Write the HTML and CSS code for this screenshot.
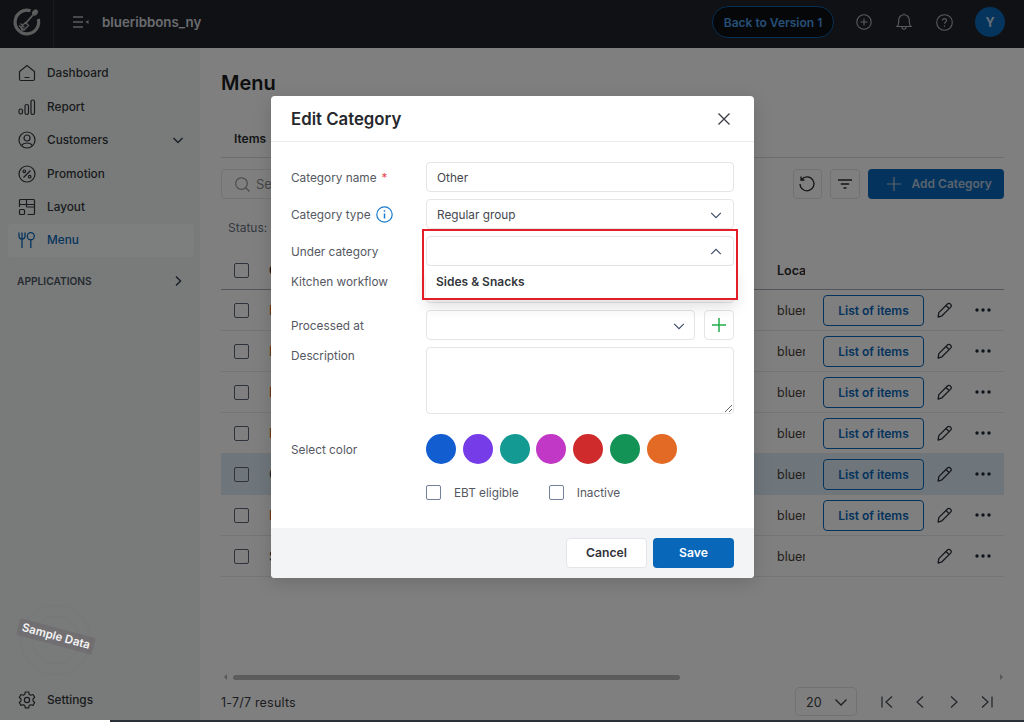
FILE: index.html
```html
<!DOCTYPE html>
<html lang="en">

<head>
    <meta charset="UTF-8">
    <meta name="viewport" content="width=device-width, initial-scale=1.0">
    <title>Edit Category</title>
    <link rel="stylesheet" href="styles.css">
</head>

<body>
    <svg class="defs" width="0" height="0">
        <symbol id="chev-down" viewBox="0 0 16 16"><path d="M2.500 5.500 8 11l5.500-5.500" fill="none" stroke="currentColor" stroke-width="1.300"/></symbol>
        <symbol id="chev-up" viewBox="0 0 16 16"><path d="M2.500 10.500 8 5l5.500 5.500" fill="none" stroke="currentColor" stroke-width="1.300"/></symbol>
        <symbol id="pencil" viewBox="0 0 16 16"><path d="M1.800 10.600 10.200 2.200c1-1 2.400-1 3.300-.1s.9 2.300-.1 3.300L5 13.800l-3.900 1.300zM9 3.500l3.500 3.500" fill="none" stroke="currentColor" stroke-width="1.300" stroke-linejoin="round"/></symbol>
        <symbol id="dots" viewBox="0 0 16 16"><circle cx="2" cy="8" r="1.700" fill="currentColor"/><circle cx="8" cy="8" r="1.700" fill="currentColor"/><circle cx="14" cy="8" r="1.700" fill="currentColor"/></symbol>
    </svg>

    <div class="app">
        <header class="topbar">
            <div class="logo-cell">
                <svg width="30" height="30" viewBox="0 0 30 30" fill="none" stroke="#b8b8b8">
                    <path d="M18.500 3.800A11.800 11.800 0 1 0 26.300 12" stroke-width="3.200"/>
                    <path d="M13 17l8-9" stroke-width="1.800"/>
                    <ellipse cx="23" cy="5.500" rx="2.600" ry="3.400" transform="rotate(40 23 5.500)" fill="#b8b8b8" stroke="none"/>
                    <path d="M13.500 15.500l3 3-4.500 4.500-3-3zM8.500 16.500l4 4M7 18.500l4 4M9 21l1.500 3" stroke-width="1.300"/>
                </svg>
            </div>
            <svg class="collapse-icon" width="16" height="12" viewBox="0 0 16 12" fill="none" stroke="#b4b6ba" stroke-width="1.300">
                <path d="M0 1h10M0 6h10M0 11h10"/>
                <path d="M15.500 4v4L12.500 6z" fill="#b4b6ba" stroke="none"/>
            </svg>
            <span class="store-name">blueribbons_ny</span>
            <div class="topbar-right">
                <button class="back-btn">Back to Version 1</button>
                <svg class="top-icon" width="16" height="16" viewBox="0 0 16 16" fill="none" stroke="#b4b6ba" stroke-width="1.100"><circle cx="8" cy="8" r="7.200"/><path d="M8 4.500v7M4.500 8h7"/></svg>
                <svg class="top-icon" width="16" height="18" viewBox="0 0 16 18" fill="none" stroke="#b4b6ba" stroke-width="1.100"><path d="M1 13.500c1.200-1 1.700-2 1.700-4V7a5.300 5.300 0 0 1 10.600 0v2.500c0 2 .5 3 1.700 4zM6 14c0 3 4 3 4 0M8 .6v1"/></svg>
                <svg class="top-icon" width="17" height="17" viewBox="0 0 17 17" fill="none" stroke="#b4b6ba" stroke-width="1.100"><circle cx="8.500" cy="8.500" r="7.800"/><path d="M6.500 6.600c0-2.600 4-2.600 4 0 0 1.500-2 1.600-2 3.200M8.500 11.500v1.200"/></svg>
                <span class="avatar">Y</span>
            </div>
        </header>

        <div class="body-row">
            <aside class="sidebar">
                <nav class="nav">
                    <a class="nav-item">
                        <svg width="18" height="18" viewBox="0 0 18 18" fill="none" stroke="currentColor" stroke-width="1.200"><path d="M1.500 15V7.500L9 1.500l7.500 6V15a1.500 1.500 0 0 1-1.500 1.500H3A1.500 1.500 0 0 1 1.500 15zM6.500 13.500h5"/></svg>
                        Dashboard
                    </a>
                    <a class="nav-item">
                        <svg width="18" height="18" viewBox="0 0 18 18" fill="none" stroke="currentColor" stroke-width="1.200"><rect x="1" y="11" width="3.500" height="5" rx="1.700"/><rect x="7" y="6.500" width="3.500" height="10" rx="1.700"/><rect x="13" y="2" width="3.500" height="14.500" rx="1.700"/></svg>
                        Report
                    </a>
                    <a class="nav-item">
                        <svg width="18" height="18" viewBox="0 0 18 18" fill="none" stroke="currentColor" stroke-width="1.200"><circle cx="9" cy="9" r="8"/><circle cx="9" cy="7" r="3"/><path d="M3.800 14.500c1-2 3-2.500 5.200-2.500s4.200.5 5.200 2.500"/></svg>
                        Customers
                        <svg class="nav-arrow" width="12" height="12" viewBox="0 0 12 12" fill="none" stroke="currentColor" stroke-width="1.500"><path d="M1.500 4 6 8.500 10.500 4"/></svg>
                    </a>
                    <a class="nav-item">
                        <svg width="18" height="18" viewBox="0 0 18 18" fill="none" stroke="currentColor" stroke-width="1.200"><circle cx="9" cy="9" r="8"/><path d="M12.500 5.500l-7 7"/><circle cx="6.300" cy="6.300" r="1.300"/><circle cx="11.700" cy="11.700" r="1.300"/></svg>
                        Promotion
                    </a>
                    <a class="nav-item">
                        <svg width="18" height="18" viewBox="0 0 18 18" fill="none" stroke="currentColor" stroke-width="1.200"><path d="M1.500 9V2.500a1 1 0 0 1 1-1h13a1 1 0 0 1 1 1v13a1 1 0 0 1-1 1h-6M1.500 6.500h15M8.500 1.500V9M8.500 9h8"/><rect x="1.500" y="11.500" width="5" height="5" rx="1"/></svg>
                        Layout
                    </a>
                    <a class="nav-item active">
                        <svg width="18" height="18" viewBox="0 0 18 18" fill="none" stroke="currentColor" stroke-width="1.300"><path d="M1 1.500V5c0 2 1.300 3 3 3s3-1 3-3V1.500M4 1.500V17"/><circle cx="12.800" cy="5.200" r="3.500"/><path d="M12.800 8.700V17"/></svg>
                        Menu
                    </a>
                    <div class="nav-section">
                        APPLICATIONS
                        <svg class="nav-arrow" width="12" height="12" viewBox="0 0 12 12" fill="none" stroke="currentColor" stroke-width="1.500"><path d="M4 1.500 8.500 6 4 10.500"/></svg>
                    </div>
                </nav>

                <div class="stamp">
                    <span class="stamp-ring"></span>
                    <span class="stamp-label">Sample Data</span>
                </div>

                <a class="nav-item settings">
                    <svg width="18" height="18" viewBox="0 0 18 18" fill="none" stroke="currentColor" stroke-width="1.200" stroke-linejoin="round"><circle cx="9" cy="9" r="2.600"/><path d="M7.300 1h3.400l.5 2.300 1.500.9 2.300-.7 1.700 2.900-1.700 1.600v1.900l1.700 1.600-1.700 2.900-2.300-.7-1.500.9-.5 2.300H7.300l-.5-2.300-1.500-.9-2.300.7-1.700-2.900L3 9.900V8L1.300 6.400 3 3.500l2.300.7 1.500-.9z"/></svg>
                    Settings
                </a>
            </aside>

            <main class="main">
                <h1 class="page-title">Menu</h1>
                <div class="tabs"><span class="tab">Items</span></div>

                <div class="toolbar">
                    <div class="search">
                        <svg width="15" height="15" viewBox="0 0 15 15" fill="none" stroke="#8a8d93" stroke-width="1.100"><circle cx="6.500" cy="6.500" r="5.800"/><path d="M10.800 10.800l3.700 3.700"/></svg>
                        <span>Search</span>
                    </div>
                    <button class="tool-btn">
                        <svg width="18" height="18" viewBox="0 0 18 18" fill="none" stroke="#2b2d31" stroke-width="1.300"><path d="M3.500 4.500A7 7 0 1 1 2 9M3 1.500v3.500h3.500"/></svg>
                    </button>
                    <button class="tool-btn">
                        <svg width="14" height="10" viewBox="0 0 14 10" fill="none" stroke="#2b2d31" stroke-width="1.300"><path d="M0 1h14M2.800 5h8.400M5.500 9h3"/></svg>
                    </button>
                    <button class="add-btn">
                        <svg width="14" height="14" viewBox="0 0 14 14" fill="none" stroke="#b4c8dc" stroke-width="1.200"><path d="M7 0v14M0 7h14"/></svg>
                        Add Category
                    </button>
                </div>

                <div class="status">Status: All</div>

                <div class="table">
                    <div class="row head">
                        <span class="check"></span><span class="cell-name">Category</span><span class="cell-loc">Loca</span>
                    </div>
                    <div class="row">
                        <span class="check"></span><span class="cell-name link">Burgers</span><span class="cell-loc">bluer</span>
                        <button class="list-btn">List of items</button>
                        <svg class="pencil"><use href="#pencil"/></svg>
                        <svg class="dots"><use href="#dots"/></svg>
                    </div>
                    <div class="row">
                        <span class="check"></span><span class="cell-name link">Drinks</span><span class="cell-loc">bluer</span>
                        <button class="list-btn">List of items</button>
                        <svg class="pencil"><use href="#pencil"/></svg>
                        <svg class="dots"><use href="#dots"/></svg>
                    </div>
                    <div class="row">
                        <span class="check"></span><span class="cell-name link">Entrees</span><span class="cell-loc">bluer</span>
                        <button class="list-btn">List of items</button>
                        <svg class="pencil"><use href="#pencil"/></svg>
                        <svg class="dots"><use href="#dots"/></svg>
                    </div>
                    <div class="row">
                        <span class="check"></span><span class="cell-name link">Pizza</span><span class="cell-loc">bluer</span>
                        <button class="list-btn">List of items</button>
                        <svg class="pencil"><use href="#pencil"/></svg>
                        <svg class="dots"><use href="#dots"/></svg>
                    </div>
                    <div class="row selected">
                        <span class="check"></span><span class="cell-name">Other</span><span class="cell-loc">bluer</span>
                        <button class="list-btn">List of items</button>
                        <svg class="pencil"><use href="#pencil"/></svg>
                        <svg class="dots"><use href="#dots"/></svg>
                    </div>
                    <div class="row">
                        <span class="check"></span><span class="cell-name link">Beer</span><span class="cell-loc">bluer</span>
                        <button class="list-btn">List of items</button>
                        <svg class="pencil"><use href="#pencil"/></svg>
                        <svg class="dots"><use href="#dots"/></svg>
                    </div>
                    <div class="row">
                        <span class="check"></span><span class="cell-name">Sides &amp; Snacks</span><span class="cell-loc">bluer</span>
                        <span></span>
                        <svg class="pencil"><use href="#pencil"/></svg>
                        <svg class="dots"><use href="#dots"/></svg>
                    </div>
                </div>

                <div class="scrollbar">
                    <span class="scroll-arrow left"></span>
                    <span class="scroll-track"><span class="scroll-thumb"></span></span>
                    <span class="scroll-arrow right"></span>
                </div>

                <div class="pager">
                    <span class="results">1-7/7 results</span>
                    <div class="page-size">20 <svg width="16" height="16"><use href="#chev-down"/></svg></div>
                    <div class="pager-icons">
                        <svg width="14" height="14" viewBox="0 0 14 14" fill="none" stroke="currentColor" stroke-width="1.200"><path d="M2 1.500v11M12 1.500 6 7l6 5.500"/></svg>
                        <svg width="14" height="14" viewBox="0 0 14 14" fill="none" stroke="currentColor" stroke-width="1.200"><path d="M10 1.500 4 7l6 5.500"/></svg>
                        <svg width="14" height="14" viewBox="0 0 14 14" fill="none" stroke="currentColor" stroke-width="1.200"><path d="M4 1.500 10 7l-6 5.500"/></svg>
                        <svg width="14" height="14" viewBox="0 0 14 14" fill="none" stroke="currentColor" stroke-width="1.200"><path d="M12 1.500v11M2 1.500 8 7l-6 5.500"/></svg>
                    </div>
                </div>
            </main>
        </div>

        <div class="overlay">
            <section class="modal">
                <div class="modal-head">
                    <h2 class="modal-title">Edit Category</h2>
                    <svg width="14" height="14" viewBox="0 0 14 14" fill="none" stroke="#3a3d44" stroke-width="1.300"><path d="M1.500 1.500l11 11M12.500 1.500l-11 11"/></svg>
                </div>

                <div class="modal-form">
                    <label class="form-label">Category name <span class="req">*</span></label>
                    <input class="field" type="text" value="Other">

                    <label class="form-label">
                        Category type
                        <svg class="info" width="17" height="17" viewBox="0 0 17 17" fill="none" stroke="#1a7ad0" stroke-width="1.200"><circle cx="8.500" cy="8.500" r="7.700"/><path d="M8.500 7.500v5M8.500 4.300v1.500" stroke-width="1.500"/></svg>
                    </label>
                    <div class="field select">Regular group <svg class="chev"><use href="#chev-down"/></svg></div>

                    <label class="form-label">Under category</label>
                    <div class="under-wrap">
                        <div class="field select focus"><svg class="chev"><use href="#chev-up"/></svg></div>
                        <div class="dropdown">Sides &amp; Snacks</div>
                        <span class="annotation"></span>
                    </div>

                    <label class="form-label top">Kitchen workflow</label>
                    <div class="field select"></div>

                    <label class="form-label">Processed at</label>
                    <div class="processed">
                        <div class="field select"><svg class="chev"><use href="#chev-down"/></svg></div>
                        <button class="plus-btn">
                            <svg width="14" height="14" viewBox="0 0 14 14" fill="none" stroke="#1fae4b" stroke-width="1.500"><path d="M7 0v14M0 7h14"/></svg>
                        </button>
                    </div>

                    <label class="form-label top">Description</label>
                    <textarea class="field notes"></textarea>

                    <label class="form-label color-label">Select color</label>
                    <div class="colors">
                        <span class="swatch c-blue"></span>
                        <span class="swatch c-violet"></span>
                        <span class="swatch c-teal"></span>
                        <span class="swatch c-pink"></span>
                        <span class="swatch c-red"></span>
                        <span class="swatch c-green"></span>
                        <span class="swatch c-orange"></span>
                    </div>

                    <span></span>
                    <div class="flags">
                        <label class="flag"><span class="check small"></span>EBT eligible</label>
                        <label class="flag"><span class="check small"></span>Inactive</label>
                    </div>
                </div>

                <div class="modal-foot">
                    <button class="btn-cancel">Cancel</button>
                    <button class="btn-save">Save</button>
                </div>
            </section>
        </div>
    </div>
    <div class="strip"></div>
</body>

</html>
```

FILE: styles.css
```css
* {
    box-sizing: border-box;
}

body {
    margin: 0;
    overflow: hidden;
    font-family: Inter, "Liberation Sans", sans-serif;
    font-size: 13px;
    color: #2b2d31;
    background: #fff;
}

button {
    font-family: inherit;
    cursor: pointer;
}

.defs {
    position: absolute;
}

.app {
    position: relative;
    display: flex;
    flex-direction: column;
    height: 720px;
    overflow: hidden;
}

.strip {
    height: 2px;
    background: linear-gradient(to right, #fff 110px, #2a3038 110px);
}

/* top bar */
.topbar {
    display: flex;
    align-items: center;
    flex: none;
    height: 48px;
    padding-bottom: 4px;
    background: #1f232b;
    color: #fff;
}

.logo-cell {
    display: flex;
    align-items: center;
    justify-content: center;
    width: 54px;
    height: 48px;
    margin-bottom: -4px;
    padding-bottom: 4px;
    border-right: 1px solid #33363c;
}

.collapse-icon {
    margin-left: 19px;
}

.store-name {
    margin-left: 13px;
    font-size: 13.3px;
    font-weight: 600;
    color: #d5d7de;
}

.topbar-right {
    display: flex;
    align-items: center;
    margin-left: auto;
    padding-right: 19px;
}

.back-btn {
    width: 122px;
    height: 32px;
    padding: 0;
    margin-right: 22px;
    border: 1px solid #0c5ea8;
    border-radius: 16px;
    background: #0b0e12;
    color: #4d9fe8;
    font-size: 12px;
    font-weight: 600;
}

.top-icon {
    margin-right: 24px;
}

.avatar {
    display: flex;
    align-items: center;
    justify-content: center;
    width: 30px;
    height: 30px;
    margin-left: -2px;
    border-radius: 50%;
    background: #0b68bb;
    color: #c9dcee;
    font-size: 12.5px;
    font-weight: 700;
}

/* sidebar */
.body-row {
    display: flex;
    flex: 1;
    min-height: 0;
}

.sidebar {
    display: flex;
    flex-direction: column;
    flex: none;
    width: 200px;
    padding: 8.800px 6px 3px 8px;
    background: #f2f6f4;
}

.nav-item {
    display: flex;
    align-items: center;
    gap: 11px;
    height: 33.400px;
    padding: 0 10px;
    font-size: 11.800px;
    font-weight: 500;
    color: #33363c;
    border-radius: 4px;
}

.nav-item.active {
    background: #fbfdfc;
    color: #0b68bb;
}

.nav-arrow {
    margin-left: auto;
    margin-right: 0;
    color: #374151;
}

.nav-section {
    display: flex;
    align-items: center;
    margin-top: 15px;
    padding: 0 10px 0 9px;
    height: 17px;
    font-size: 10.200px;
    font-weight: 600;
    color: #4b5563;
}

.stamp {
    position: relative;
    width: 72px;
    height: 72px;
    margin: auto 0 8px 12px;
}

.stamp-ring {
    display: block;
    width: 72px;
    height: 72px;
    border: 2px solid #eef2f0;
    border-radius: 50%;
    box-shadow: inset 0 0 0 9px #f2f6f4, inset 0 0 0 11px #eef2f0;
}

/* not dimmed by the overlay in the reference */
.stamp-label {
    position: absolute;
    z-index: 2;
    left: -3px;
    top: 24px;
    width: 78px;
    padding: 1px 0 2px;
    background: rgba(100, 90, 100, .35);
    border-radius: 2px;
    color: #f4f4f4;
    font-size: 11.500px;
    font-weight: 600;
    text-align: center;
    white-space: nowrap;
    transform: rotate(15deg);
}

.settings {
    flex: none;
}

/* main */
.main {
    position: relative;
    flex: 1;
    min-width: 0;
    padding: 0 20px 0 21px;
    background: #fff;
}

.page-title {
    margin: 23px 0 0;
    font-size: 20px;
    line-height: 24px;
    font-weight: 600;
    color: #1b1d21;
}

.tabs {
    height: 43px;
    margin-top: 20px;
    padding-top: 12px;
    border-bottom: 1px solid #d9dbe0;
    line-height: 22px;
}

.tab {
    margin-left: 13px;
    font-size: 12px;
    font-weight: 600;
}

.toolbar {
    display: flex;
    align-items: center;
    gap: 8px;
    margin-top: 11px;
}

.search {
    display: flex;
    align-items: center;
    gap: 6px;
    height: 30px;
    width: 300px;
    margin-right: auto;
    padding-left: 13px;
    border: 1px solid #e5e7eb;
    border-radius: 4px;
    color: #8a8d93;
}

.tool-btn {
    display: flex;
    align-items: center;
    justify-content: center;
    width: 29.500px;
    height: 30px;
    padding: 0;
    border: 1px solid #e0e2e6;
    border-radius: 4px;
    background: #fff;
}

.add-btn {
    display: flex;
    align-items: center;
    gap: 11px;
    width: 136.500px;
    height: 30px;
    padding: 0 0 1px 19px;
    border: 0;
    border-radius: 4px;
    background: #0967ba;
    color: #b4c8dc;
    font-size: 12px;
    font-weight: 600;
}

.status {
    margin-top: 20px;
    padding-left: 7px;
    font-size: 12px;
    line-height: 18px;
    color: #6b7280;
}

/* table */
.table {
    margin-top: 12px;
}

.row {
    display: grid;
    grid-template-columns: 48px 508px 46px 101px 42px 34px;
    align-items: center;
    height: 41px;
    border-bottom: 1px solid #e7e8ec;
    font-size: 12.500px;
}

.row.head {
    height: 42px;
    padding-top: 4px;
    border-bottom-color: #a5aab5;
    font-weight: 600;
    margin-top: -1px;
}

.row.selected {
    background: #dcecf6;
}

.check {
    display: block;
    width: 15px;
    height: 15px;
    margin-left: 13px;
    border: 1px solid #5c6573;
    border-radius: 2px;
    background: #fff;
}

.row.selected .check {
    background: #dcecf6;
}

.cell-name {
    white-space: nowrap;
    overflow: hidden;
}

.cell-name.link {
    color: #c95e14;
}

.cell-loc {
    width: 28px;
    overflow: hidden;
    white-space: nowrap;
    color: #4a3f3a;
}

.head .cell-loc {
    color: #2b2d31;
}

.list-btn {
    height: 31px;
    padding: 0;
    border: 1px solid #0967ba;
    border-radius: 4px;
    background: transparent;
    color: #0967ba;
    font-size: 12px;
    font-weight: 600;
}

.pencil {
    width: 16px;
    height: 16px;
    margin-left: 13px;
    color: #2b3038;
}

.dots {
    width: 16px;
    height: 16px;
    margin-left: 9px;
    color: #1f2937;
}

/* scrollbar + pager */
.scrollbar {
    position: absolute;
    left: 21px;
    right: 18px;
    top: 626px;
    display: flex;
    align-items: center;
    height: 6px;
}

.scroll-track {
    flex: 1;
    padding: 0 6px;
}

.scroll-thumb {
    display: block;
    width: 447px;
    height: 5px;
    border-radius: 3px;
    background: #b9b9b9;
}

.scroll-arrow {
    width: 0;
    height: 0;
    border: 3px solid transparent;
}

.scroll-arrow.left {
    border-right-color: #b0b0b0;
}

.scroll-arrow.right {
    border-left-color: #b0b0b0;
}

.pager {
    position: absolute;
    left: 21px;
    right: 20px;
    top: 639px;
    display: flex;
    align-items: center;
    height: 29px;
}

.results {
    padding-top: 2px;
    font-size: 12.500px;
    color: #3a3d44;
    letter-spacing: .2px;
}

.page-size {
    display: flex;
    align-items: center;
    gap: 11px;
    width: 62px;
    height: 29px;
    margin-left: auto;
    padding: 1px 0 0 10px;
    border: 1px solid #e3e5e9;
    border-radius: 4px;
    font-size: 12.500px;
    color: #3a3d44;
}

.pager-icons {
    display: flex;
    gap: 19.300px;
    margin-left: 23px;
    margin-right: 10px;
    color: #3f4652;
}

/* modal */
.overlay {
    position: absolute;
    inset: 0;
    z-index: 1;
    display: flex;
    justify-content: center;
    align-items: flex-start;
    padding: 96px 0 0 1px;
    background: rgba(0, 0, 0, .5);
}

.modal {
    width: 483px;
    border-radius: 4px;
    background: #fff;
    overflow: visible;
    box-shadow: 0 4px 18px rgba(0, 0, 0, .15);
}

.modal-head {
    display: flex;
    align-items: center;
    justify-content: space-between;
    height: 46px;
    padding: 0 23px 0 20px;
    border-bottom: 1px solid #e8eaed;
}

.modal-title {
    margin: 0;
    font-size: 16.800px;
    font-weight: 600;
    color: #26282d;
}

.modal-form {
    display: grid;
    grid-template-columns: 135px 308px;
    gap: 7px 0;
    padding: 20px 20px 28px;
}

.form-label {
    display: flex;
    align-items: center;
    gap: 5px;
    padding-top: 1px;
    font-size: 11.800px;
    color: #55585f;
}

.form-label.top {
    align-self: start;
    align-items: flex-start;
    padding-top: 0;
    line-height: 18px;
}

.color-label {
    margin-top: 13px;
}

.req {
    color: #e5484d;
}

.field {
    display: block;
    width: 100%;
    height: 30px;
    padding: 1px 10px 0;
    border: 1px solid #e3e5e9;
    border-radius: 4px;
    background: #fff;
    font-family: inherit;
    font-size: 11.800px;
    color: #44474e;
    outline: none;
}

.select {
    display: flex;
    align-items: center;
    justify-content: space-between;
}

.chev {
    width: 14px;
    height: 14px;
    margin-left: auto;
    margin-right: 0;
    color: #3d4b66;
}

.under-wrap {
    position: relative;
}

.dropdown {
    position: absolute;
    left: 0;
    right: -2px;
    top: 30px;
    z-index: 2;
    height: 33px;
    padding: 8px 10px;
    background: #fff;
    font-size: 12px;
    font-weight: 600;
    color: #33363c;
    box-shadow: 0 8px 14px rgba(0, 0, 0, .12);
}

.annotation {
    position: absolute;
    left: -4px;
    right: -4px;
    top: -7px;
    z-index: 3;
    height: 71px;
    border: 2px solid #e21f26;
}

.processed {
    display: flex;
    gap: 9px;
}

.processed .select {
    flex: 1;
}

.processed .chev {
    margin-right: -2px;
}

.plus-btn {
    display: flex;
    align-items: center;
    justify-content: center;
    flex: none;
    width: 30px;
    height: 30px;
    padding: 0;
    border: 1px solid #e3e5e9;
    border-radius: 4px;
    background: #fff;
}

.notes {
    height: 67px;
    padding: 8px 10px;
    resize: vertical;
}

.colors {
    display: flex;
    gap: 6.800px;
    margin-top: 13px;
}

.swatch {
    width: 30px;
    height: 30px;
    border-radius: 50%;
}

.c-blue { background: #125dcf; }
.c-violet { background: #763ce8; }
.c-teal { background: #139a92; }
.c-pink { background: #c238c6; }
.c-red { background: #cf2b2d; }
.c-green { background: #149356; }
.c-orange { background: #e26a24; }

.flags {
    display: flex;
    gap: 30px;
    margin-top: 14px;
}

.flag {
    display: flex;
    align-items: center;
    font-size: 11.800px;
    color: #55585f;
}

.check.small {
    margin: 0 13px 0 0;
    border-color: #73809a;
}

.modal-foot {
    display: flex;
    justify-content: flex-end;
    gap: 6px;
    height: 50px;
    padding: 10px 20px;
    background: #f3f4f6;
    border-radius: 0 0 4px 4px;
}

.btn-cancel,
.btn-save {
    width: 81px;
    height: 30px;
    padding: 0 0 1px;
    border-radius: 4px;
    font-size: 12.200px;
    font-weight: 600;
}

.btn-cancel {
    border: 1px solid #e3e5e9;
    background: #fff;
    color: #2f3237;
}

.btn-save {
    border: 0;
    background: #0967ba;
    color: #fff;
}
```
